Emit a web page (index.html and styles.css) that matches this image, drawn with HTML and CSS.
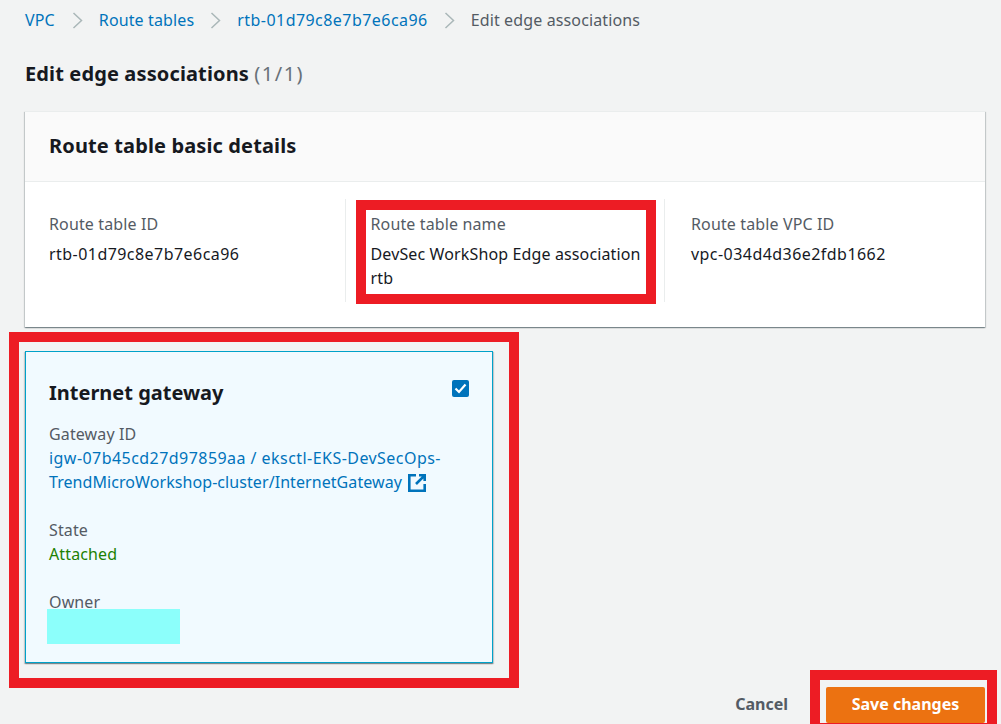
FILE: index.html
```
<!DOCTYPE html>
<html lang="en">
<head>
<meta charset="utf-8">
<title>Edit edge associations</title>
<link rel="stylesheet" href="styles.css">
</head>
<body>
<main class="page">
  <nav class="crumbs">
    <a class="root" href="#">VPC</a>
    <svg class="sep" viewBox="0 0 11 17"><path d="M1.5 1 9.5 8.5l-8 7.5"/></svg>
    <a href="#">Route tables</a>
    <svg class="sep" viewBox="0 0 11 17"><path d="M1.5 1 9.5 8.5l-8 7.5"/></svg>
    <a class="id" href="#">rtb-01d79c8e7b7e6ca96</a>
    <svg class="sep" viewBox="0 0 11 17"><path d="M1.5 1 9.5 8.5l-8 7.5"/></svg>
    <span class="current">Edit edge associations</span>
  </nav>
  <h1 class="title">Edit edge associations <span class="count">(1/1)</span></h1>
  <section class="details">
    <h2 class="details-head">Route table basic details</h2>
    <div class="columns">
      <div class="col">
        <div class="label">Route table ID</div>
        <div class="value id">rtb-01d79c8e7b7e6ca96</div>
      </div>
      <div class="col mid">
        <div class="label">Route table name</div>
        <div class="value">DevSec WorkShop Edge association rtb</div>
      </div>
      <div class="col last">
        <div class="label">Route table VPC ID</div>
        <div class="value id">vpc-034d4d36e2fdb1662</div>
      </div>
    </div>
  </section>
  <section class="gateway">
    <div class="gw-head">
      <h2 class="gw-title">Internet gateway</h2>
      <span class="check"><svg viewBox="0 0 17 17"><path d="M3.5 8.5 7 12l6.5-7.5"/></svg></span>
    </div>
    <div class="field">
      <div class="label">Gateway ID</div>
      <a class="link" href="#"><span class="id">igw-07b45cd27d97859aa / eksctl-EKS-DevSecOps-</span>TrendMicroWorkshop-cluster/InternetGateway <svg class="ext" viewBox="0 0 18 18"><path d="M8 1.3H1.3v15.4h15.4V10M11 1.3h5.7V7M16.7 1.3 8 10"/></svg></a>
    </div>
    <div class="field">
      <div class="label">State</div>
      <div class="ok">Attached</div>
    </div>
    <div class="field">
      <div class="label">Owner</div>
    </div>
    <div class="redact"></div>
  </section>
  <footer class="actions">
    <a class="cancel" href="#">Cancel</a>
    <button class="save" type="button">Save changes</button>
  </footer>
</main>
<div class="mark mark-name"></div>
<div class="mark mark-gateway"></div>
<div class="mark mark-save"></div>
</body>
</html>
```
FILE: styles.css
```
* { box-sizing: border-box; }
html, body { margin: 0; height: 100%; }
body {
  position: relative;
  height: 724px;
  overflow: hidden;
  background: #f2f3f3;
  color: #16191f;
  font-family: "Noto Sans", "Open Sans", sans-serif;
  font-size: 16px;
  line-height: 24px;
  letter-spacing: .13px;
}
a { color: #0073bb; text-decoration: none; }
.id { letter-spacing: .45px; }
.page { padding: 8px 16px 0 25px; }
.crumbs { display: flex; align-items: center; height: 24px; }
.crumbs .root { margin-right: 1px; }
.crumbs .sep { width: 11px; height: 17px; margin: 1px 16px 0; fill: none; stroke: #aab7b8; stroke-width: 1.5; }
.current { color: #545b64; }
.title { margin: 28px 0 0; font-size: 20px; line-height: 28px; font-weight: 700; }
.count { color: #687078; font-weight: 400; letter-spacing: 1.5px; }
.details { margin-top: 23px; height: 216px; background: #fff; border-top: 1px solid #eaeded; box-shadow: 0 1px 1px 0 rgba(0,28,36,.3), 1px 1px 1px 0 rgba(0,28,36,.15), -1px 1px 1px 0 rgba(0,28,36,.15); }
.details-head { margin: 0; height: 70px; padding: 20px 24px 0; background: #fafafa; border-bottom: 1px solid #eaeded; font-size: 20px; line-height: 28px; font-weight: 700; }
.columns { display: grid; grid-template-columns: 320px 320px 320px; padding-top: 17px; }
.col { min-height: 103px; padding: 13px 24px 0; }
.col.mid { padding: 13px 12px 0 24.5px; border-left: 1px solid #eaeded; border-right: 1px solid #eaeded; }
.col.last { padding-left: 26px; }
.label { color: #545b64; }
.value { margin-top: 6px; color: #16191f; }
.gateway { position: relative; margin-top: 24px; width: 468px; height: 312px; padding: 25px 23px; background: #f1faff; border: 1px solid #00a1c9; box-shadow: 0 1px 1px 0 rgba(0,28,36,.3), 1px 1px 1px 0 rgba(0,28,36,.15), -1px 1px 1px 0 rgba(0,28,36,.15); }
.gw-head { display: flex; justify-content: space-between; align-items: flex-start; height: 45px; }
.gw-title { margin: 2px 0 0; font-size: 20px; line-height: 28px; font-weight: 700; letter-spacing: 0; }
.check { width: 17px; height: 17px; margin-top: 3px; background: #0073bb; border-radius: 2px; }
.check svg { display: block; width: 17px; height: 17px; fill: none; stroke: #fff; stroke-width: 2.2; }
.field { margin-bottom: 24px; }
.link { display: block; letter-spacing: .07px; }
.ext { display: inline-block; width: 18px; height: 18px; margin-left: 2px; vertical-align: -4px; fill: none; stroke: #0073bb; stroke-width: 2.6; }
.ok { color: #1d8102; }
.redact { position: absolute; left: 21px; top: 257px; width: 133px; height: 35px; background: #8cfffb; }
.actions { display: flex; justify-content: flex-end; align-items: flex-start; margin-top: 24px; gap: 38px; }
.cancel { color: #545b64; font-weight: 700; letter-spacing: 0; padding-top: 5px; }
.save { width: 159px; height: 36px; padding: 0 0 2px; border: 0; border-radius: 2px; background: #ec7211; color: #fff; font: 700 16px/24px "Noto Sans", sans-serif; }
.mark { position: absolute; border: 10px solid #ed1c24; }
.mark-name { left: 356px; top: 200px; width: 300px; height: 104px; }
.mark-gateway { left: 9px; top: 332px; width: 510px; height: 356px; }
.mark-save { left: 810px; top: 670px; width: 187px; height: 63px; }
```
